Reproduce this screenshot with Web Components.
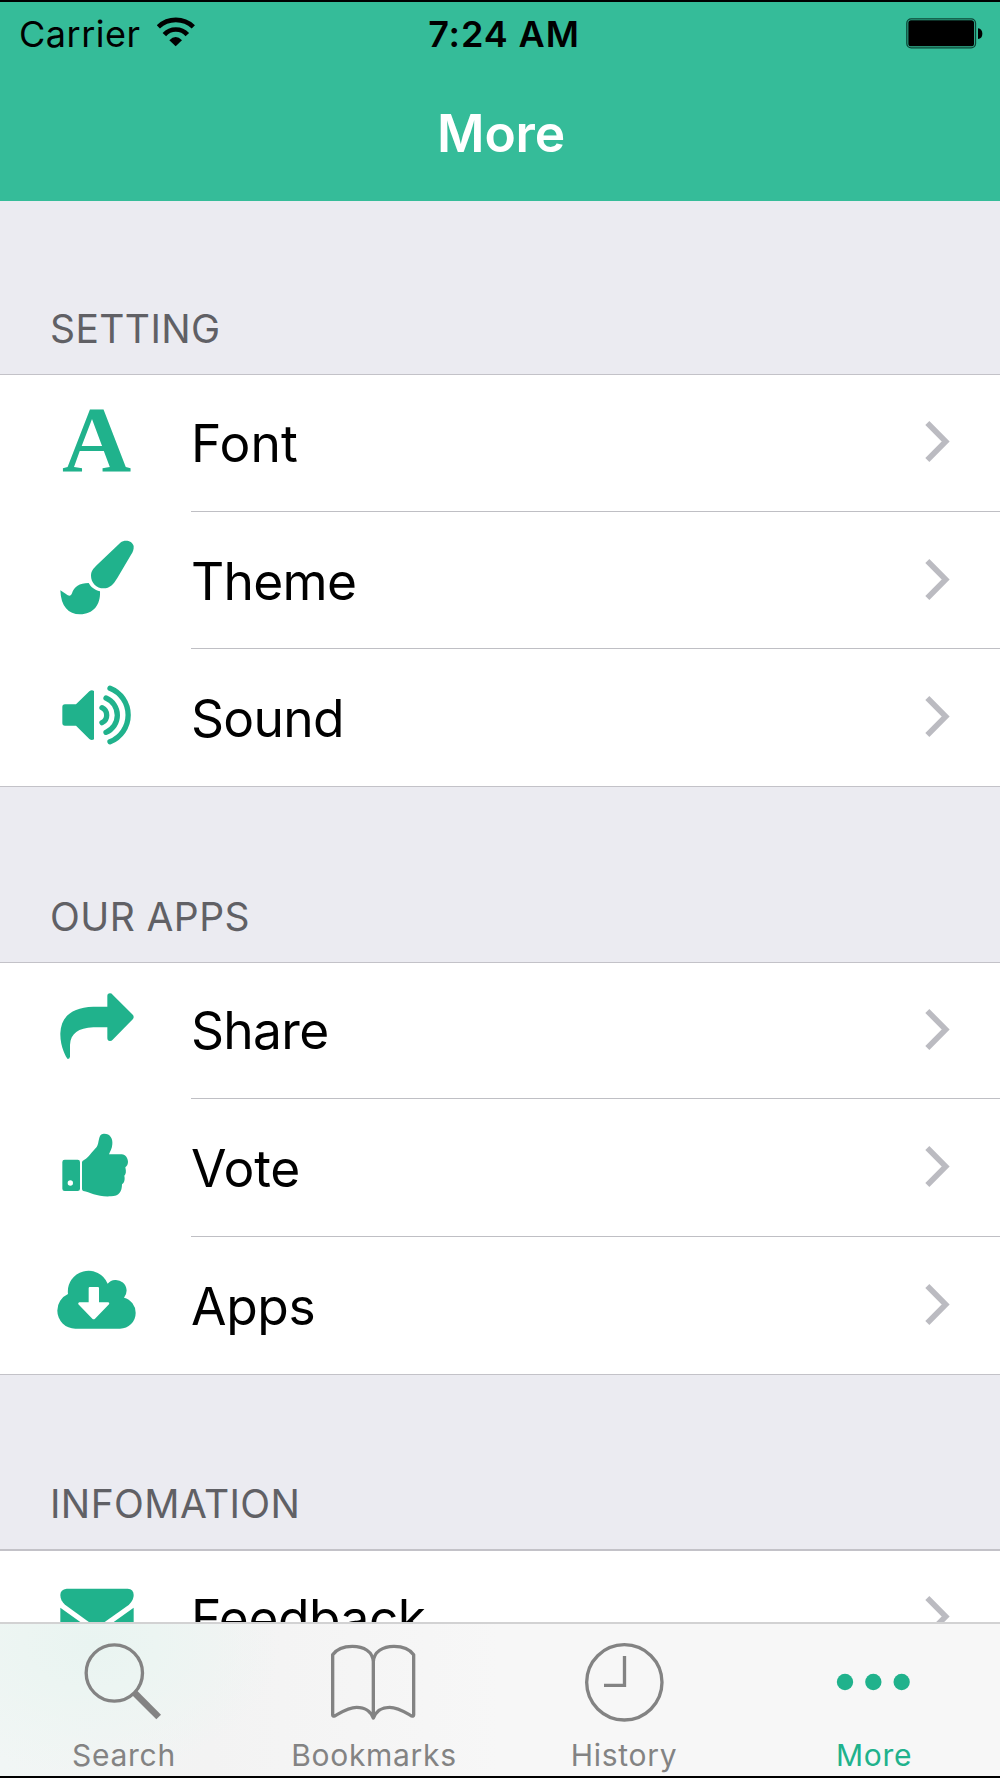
<!DOCTYPE html>
<html lang="en">
<head>
<meta charset="utf-8">
<title>More</title>
<style>
html, body { margin: 0; height: 100%; }
body { font-family: Inter, "Liberation Sans", sans-serif; overflow: hidden; background: #000; }
</style>
</head>
<body>
<more-screen></more-screen>
<script>
const ICONS = {
  font: `<text x="0" y="0" transform="translate(186 544) scale(1.02 1)" font-family="Liberation Serif" font-weight="700" font-size="282">A</text>`,
  theme: `<path d="M361 98C375 88 396 92 401 108C402 118 398 127 394 133L352 204C340 224 329 235 311 235C289 235 273 218 273 197C273 184 280 176 290 166Z"/><path d="M181 241L198 252C207 260 213 258 216 250C222 230 238 219 266 219C272 230 283 240 300 244C302 285 280 313 240 313C205 313 183 290 181 241Z"/>`,
  sound: `<path d="M195 583H228L268 544Q275 538 282 543V688Q275 693 268 687L228 647H195Q187 647 187 639V591Q187 583 195 583Z"/><g fill="none" stroke="currentColor" stroke-width="16" stroke-linecap="round"><path d="M306 593A25 25 0 0 1 306 638"/><path d="M318 564A56 56 0 0 1 318 667"/><path d="M330 535A86 86 0 0 1 330 695"/></g>`,
  share: `<path d="M322 350V318Q322 310 330 310Q335 310 338 314L399 375Q403 381 399 387L338 449Q335 453 330 453Q322 453 322 444V412H280C235 414 212 430 210 465V500Q209 507 203 507C199 504 180 470 181 430C183 380 215 352 280 350Z"/>`,
  vote: `<path fill-rule="evenodd" d="M194 149H233Q240 149 240 156V236Q240 243 233 243H194Q187 243 187 236V156Q187 149 194 149ZM211 211A8 8 0 1 0 211 227A8 8 0 1 0 211 211Z"/><path d="M246 157Q246 152 252 150C260 147 268 136 274 129L290 111C299 99 293 71 311 71C330 70 339 85 337 103C336 117 330 125 327 133H365C377 134 384 145 384 156C383 165 381 168 376 172C379 185 378 192 373 197C376 212 371 219 366 223C366 245 357 259 333 259C295 262 270 247 250 243Q246 242 246 237Z"/>`,
  apps: `<path d="M226 656A54 54 0 0 1 172 602A54 54 0 0 1 204 552A62 62 0 0 1 323 521A31 31 0 0 1 372 563A47 47 0 0 1 407 609A47 47 0 0 1 360 656Z"/><path fill="#fff" d="M269 531H294Q297 531 297 535V577H325Q330 579 327 583L285 626Q281 629 277 626L235 583Q233 578 238 577H266V535Q266 531 269 531Z"/>`,
  mail: `<path d="M200 326H383Q401 327 401 345C401 358 393 368 386 375L290 443L195 374C186 366 181 357 181 345Q181 328 200 326Z"/><path d="M181 383L291 462L401 383V490H181Z"/>`,
  search: `<g fill="none" stroke="currentColor"><circle cx="343" cy="579" r="84.500" stroke-width="10"/><path stroke-width="20" d="M403 638L476 711"/></g>`,
  book: `<path fill="none" stroke="currentColor" stroke-width="10" stroke-linejoin="round" d="M1120 714V545C1118 515 1092 499 1057 499C1030 499 1008 510 998 524V705Q998 710 1004 708C1025 696 1045 682 1070 682C1100 682 1112 695 1120 714C1128 695 1140 682 1169 682C1194 682 1214 696 1235 708Q1241 710 1241 705V524C1231 510 1209 499 1182 499C1148 499 1122 515 1120 545"/>`,
  clock: `<g fill="none" stroke="currentColor" stroke-width="10"><circle cx="373" cy="607" r="113"/><path d="M373.500 528V616H312"/></g>`,
  dots: `<circle cx="1035" cy="606" r="24.500"/><circle cx="1120" cy="606" r="24.500"/><circle cx="1205" cy="606" r="24.500"/>`
};

class BaseElement extends HTMLElement {
  connectedCallback() {
    if (this.shadowRoot) return;
    this.attachShadow({ mode: 'open' }).innerHTML = this.render();
  }
  attr(name, fallback = '') { return this.getAttribute(name) ?? fallback; }
}

customElements.define('status-bar', class extends BaseElement {
  render() {
    return `<style>
      :host { display: grid; grid-template-columns: 1fr auto 1fr; align-items: center; height: 65px; color: #000; font-size: 36px; line-height: 65px; }
      .left { display: flex; padding-left: 19px; }
      .carrier { width: 138px; letter-spacing: .5px; white-space: nowrap; }
      .time { font-weight: 600; letter-spacing: .9px; padding-left: 8px; }
      .right { display: flex; justify-content: flex-end; }
      svg { display: block; }
    </style>
    <div class="left"><span class="carrier">Carrier</span>
      <svg width="40" height="65" viewBox="471 6 120 195"><g fill="none" stroke="#000" stroke-width="14"><path d="M475 80.500A76 76 0 0 1 580 80.500"/><path d="M493 104A46 46 0 0 1 562 104"/></g><path d="M508 121Q527 101 546 121L527 139Z"/></svg></div>
    <span class="time">7:24 AM</span>
    <div class="right"><svg width="100" height="65" viewBox="120 6 300 195"><rect x="140.500" y="56.500" width="206" height="87" rx="13" fill="none" stroke="#0c4536" stroke-width="4"/><rect x="145" y="61" width="197" height="78" rx="8"/><path d="M354 85Q367 87 367 101Q367 115 354 117Z"/></svg></div>`;
  }
});

customElements.define('nav-bar', class extends BaseElement {
  render() {
    return `<style>
      :host { display: flex; justify-content: center; height: 134px; padding-left: 2px; box-sizing: border-box; color: #fff; font-size: 51.5px; font-weight: 570; line-height: 132px; letter-spacing: -.2px; }
    </style><slot></slot>`;
  }
});

customElements.define('list-section', class extends BaseElement {
  render() {
    return `<style>
      :host { display: block; }
      header { display: flex; align-items: flex-end; box-sizing: border-box; height: var(--head, 175px); padding: 0 0 21px 50px; color: #606065; font-size: 39px; line-height: 48px; letter-spacing: .4px; background: #ebebf1; }
      .rows { display: flex; flex-direction: column; background: #fff; border-top: var(--line, 1px) solid #c3c2c8; border-bottom: 1px solid #c3c2c8; }
    </style><header>${this.attr('heading')}</header><div class="rows"><slot></slot></div>`;
  }
});

customElements.define('list-row', class extends BaseElement {
  render() {
    return `<style>
      :host { display: flex; height: var(--row, 137px); color: #000; }
      .icon { flex: none; width: 191px; height: 136px; color: #20b28c; fill: currentColor; }
      .body { box-sizing: border-box; flex: 1; display: flex; align-items: flex-start; justify-content: space-between; border-bottom: 1px solid #bfbfc4; height: 100%; }
      :host([last]) .body { border-bottom: 0; }
      .label { font-size: 51.5px; line-height: 137px; margin-top: var(--text-drop, 0px); letter-spacing: var(--track, -.7px); white-space: nowrap; }
      .chevron { width: 120px; height: 136px; margin-top: var(--arrow-drop, 0px); margin-bottom: -2px; fill: none; stroke: #bbbbc1; stroke-width: 17; }
    </style>
    <svg class="icon" viewBox="0 ${this.attr('offset')} 573 408">${ICONS[this.attr('icon')]}</svg>
    <div class="body"><span class="label"><slot></slot></span>
      <svg class="chevron" viewBox="0 45 360 408"><path d="M142 189L197 244.500L142 300"/></svg></div>`;
  }
});

customElements.define('tab-item', class extends BaseElement {
  render() {
    return `<style>
      :host { flex: 1; display: flex; flex-direction: column; align-items: center; color: #838383; font-size: 30px; line-height: 36px; }
      :host([selected]) { color: #20b28c; }
      svg { display: block; width: 250px; height: 113px; fill: currentColor; }
      .label { letter-spacing: .7px; padding-right: 2px; }
    </style>
    <svg viewBox="${this.attr('offset')} 432 750 339">${ICONS[this.attr('icon')]}</svg>
    <span class="label"><slot></slot></span>`;
  }
});

customElements.define('tab-bar', class extends BaseElement {
  render() {
    return `<style>
      :host { display: flex; height: 152px; border-top: 2px solid #d2d2d3; background: radial-gradient(ellipse 190px 130px at 90px 20px, #e9f4f1, #ecf5f2 35%, transparent), linear-gradient(90deg, #f1f6f5 0, #f3f3f3 210px, #f7f7f7 500px); }
    </style><slot></slot>`;
  }
});

customElements.define('more-screen', class extends BaseElement {
  render() {
    return `<style>
      :host { display: flex; flex-direction: column; box-sizing: border-box; width: 1000px; height: 1778px; border-top: 2px solid #000; border-bottom: 2px solid #000; overflow: hidden; }
      .top { flex: none; background: #35bc99; }
      main { flex: 1; min-height: 0; overflow: hidden; background: #ebebf1; }
      tab-bar { flex: none; }
    </style>
    <div class="top"><status-bar></status-bar><nav-bar>More</nav-bar></div>
    <main>
      <list-section heading="SETTING" style="--head:173px">
        <list-row icon="font" offset="255" style="--track:.1px">Font</list-row>
        <list-row icon="theme" offset="6" style="--text-drop:.6px;--arrow-drop:1px">Theme</list-row>
        <list-row icon="sound" offset="417" style="--text-drop:1px;--arrow-drop:1px" last>Sound</list-row>
      </list-section>
      <list-section heading="OUR APPS">
        <list-row icon="share" offset="219" style="--row:136px;--text-drop:-1px">Share</list-row>
        <list-row icon="vote" offset="-33" style="--row:138px;--text-drop:1px;--arrow-drop:1px;--track:-.3px">Vote</list-row>
        <list-row icon="apps" offset="381" style="--text-drop:.5px;--arrow-drop:.5px;--track:-.4px" last>Apps</list-row>
      </list-section>
      <list-section heading="INFOMATION" style="--head:174px;--line:2px">
        <list-row icon="mail" offset="213" style="--text-drop:-1px;--arrow-drop:-1px;--track:-.5px">Feedback</list-row>
      </list-section>
    </main>
    <tab-bar>
      <tab-item icon="search" offset="0">Search</tab-item>
      <tab-item icon="book" offset="750">Bookmarks</tab-item>
      <tab-item icon="clock" offset="0">History</tab-item>
      <tab-item icon="dots" offset="750" selected>More</tab-item>
    </tab-bar>`;
  }
});
</script>
</body>
</html>
